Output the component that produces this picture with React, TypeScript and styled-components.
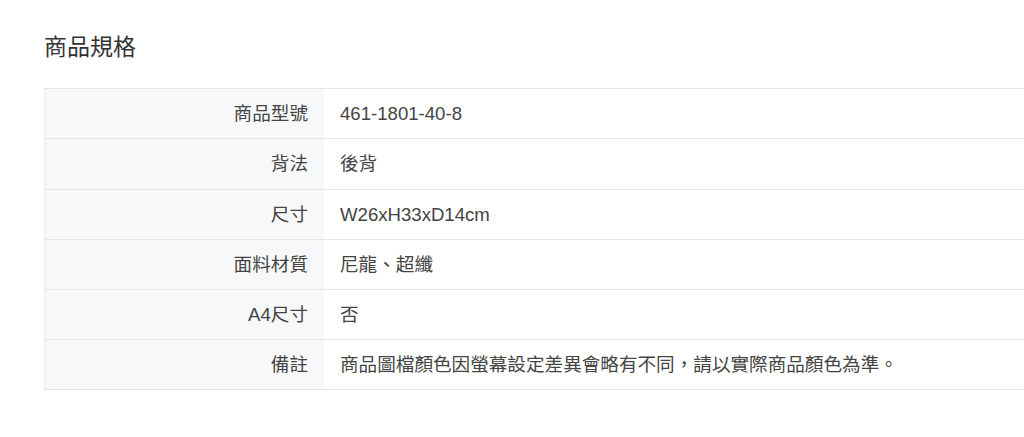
import React from "react";
import styled, { createGlobalStyle } from "styled-components";

const Global = createGlobalStyle`
  html, body { margin: 0; padding: 0; background: #fff; overflow: hidden; }
  body { font-family: "Liberation Sans", "Noto Sans CJK TC", sans-serif; color: #333; }
`;

const Page = styled.div`
  padding: 29px 0 0 44px;
`;

const Title = styled.h2`
  margin: 0 0 23px 0;
  font-size: 23px;
  font-weight: 400;
  line-height: 36px;
  color: #333;
`;

const Table = styled.div`
  display: grid;
  grid-template-columns: 279px 1fr;
  border-top: 1px solid #e6e6e6;
  border-left: 1px solid #ececec;
`;

const Cell = styled.div<{ $tall?: boolean }>`
  height: ${(p) => (p.$tall ? 50 : 49)}px;
  line-height: ${(p) => (p.$tall ? 50 : 49)}px;
  font-size: 18.6px;
  color: #444;
  border-bottom: 1px solid #e6e6e6;
  white-space: nowrap;
`;

const Label = styled(Cell)`
  background: #f7f8fa;
  text-align: right;
  padding-right: 16px;
`;

const Value = styled(Cell)`
  padding-left: 16px;
`;

const rows: [string, string][] = [
  ["商品型號", "461-1801-40-8"],
  ["背法", "後背"],
  ["尺寸", "W26xH33xD14cm"],
  ["面料材質", "尼龍、超纖"],
  ["A4尺寸", "否"],
  ["備註", "商品圖檔顏色因螢幕設定差異會略有不同，請以實際商品顏色為準。"],
];

export default function App() {
  return (
    <>
      <Global />
      <Page>
        <Title>商品規格</Title>
        <Table>
          {rows.map(([k, v], i) => (
            <React.Fragment key={k}>
              <Label $tall={i === 1}>{k}</Label>
              <Value $tall={i === 1}>{v}</Value>
            </React.Fragment>
          ))}
        </Table>
      </Page>
    </>
  );
}
